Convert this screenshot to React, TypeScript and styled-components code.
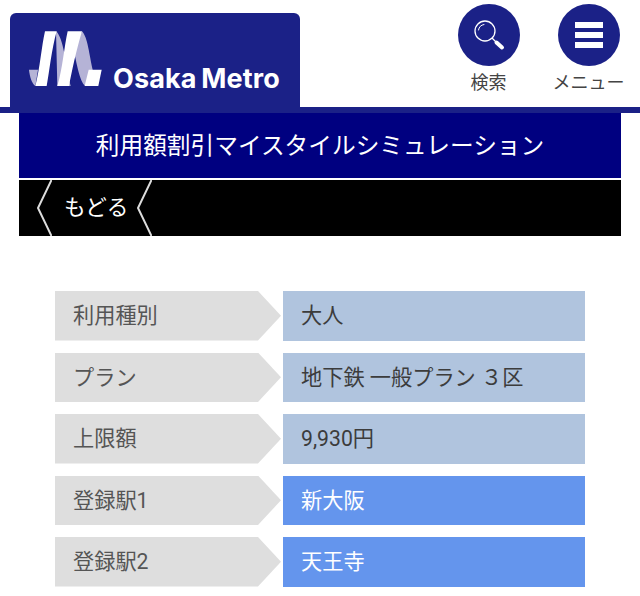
import styled, { createGlobalStyle } from 'styled-components';

const GlobalStyle = createGlobalStyle`
  html, body {
    margin: 0;
    padding: 0;
    background: #fff;
    font-family: Roboto, "Noto Sans CJK JP", "Noto Sans", sans-serif;
  }
`;

const Header = styled.header`
  display: flex;
  justify-content: space-between;
  height: 107px;
  border-bottom: 6px solid #1b2187;
`;

const LogoTab = styled.a`
  display: flex;
  align-items: flex-start;
  width: 290px;
  height: 100px;
  margin: 13px 0 0 10px;
  padding: 9px 0 0 10px;
  box-sizing: border-box;
  background: #1b2187;
  border-radius: 6px 6px 0 0;
`;

const LogoName = styled.span`
  margin: 39px 0 0 3px;
  color: #fff;
  font-family: Inter, sans-serif;
  font-size: 27px;
  line-height: 36px;
  font-weight: 700;
  letter-spacing: 0.15px;
  word-spacing: -2px;
  white-space: nowrap;
`;

const Nav = styled.nav`
  display: flex;
  gap: 27px;
  padding: 4px 15px 0 0;
`;

const NavItem = styled.a`
  display: flex;
  flex-direction: column;
  align-items: center;
  width: 73px;
  color: #444;
  font-size: 18px;
  line-height: 26px;
`;

const Circle = styled.span`
  display: flex;
  flex-direction: column;
  align-items: center;
  justify-content: center;
  gap: 4.5px;
  width: 62px;
  height: 62px;
  margin-bottom: 4px;
  border-radius: 50%;
  background: #1b2187;
`;

const Bar = styled.i`
  display: block;
  width: 28px;
  height: 5.5px;
  background: #fff;
`;

const Main = styled.main`
  padding: 0 19px;
`;

const Title = styled.h1`
  margin: 0;
  height: 65px;
  background: #000080;
  color: #fff;
  font-size: 23.7px;
  font-weight: 400;
  line-height: 67px;
  text-align: center;
  white-space: nowrap;
`;

const BackBar = styled.div`
  display: flex;
  align-items: center;
  gap: 12px;
  height: 56px;
  margin-top: 2px;
  padding-left: 17px;
  background: #000;
  color: #fff;
  font-size: 21.6px;
`;

const BackText = styled.span`
  margin-right: -4px;
  padding-bottom: 6px;
`;

const Rows = styled.div`
  display: flex;
  flex-direction: column;
  gap: 12px;
  margin: 55px 36px 0;
  padding-bottom: 10px;
`;

const Row = styled.div`
  display: grid;
  grid-template-columns: 226px 302px;
  column-gap: 2px;
  height: 49.5px;
  font-size: 21.2px;
  line-height: 49.5px;
`;

const Label = styled.div`
  padding-left: 18px;
  background: #dedede;
  color: #555;
  clip-path: polygon(0 0, 203px 0, 100% 50%, 203px 100%, 0 100%);
`;

const Value = styled.div<{ $selected?: boolean }>`
  padding-left: 18px;
  background: ${(p) => (p.$selected ? '#6495ed' : '#b0c4de')};
  color: ${(p) => (p.$selected ? '#fff' : '#3c3c3c')};
  white-space: pre;
`;

const Chevron = () => (
  <svg width="16" height="56" viewBox="0 0 16 56" fill="none" stroke="#ddd" strokeWidth="2">
    <path d="M15.5 0 L2 28 L15.5 56" />
  </svg>
);

const Logo = () => (
  <svg width="90" height="74" viewBox="0 0 270 222">
    <g fill="#b5b3d6">
      <path d="M27 143 H54 L46 192 C36 185 29 165 27 143 Z" />
      <path d="M108 28 C130 45 138 130 152 192 H112 Z" />
      <path d="M186 28 C203 45 208 100 218 143 L196 192 C178 178 170 120 160 80 Z" />
    </g>
    <g fill="#fff">
      <path d="M75 28 H110 C95 80 88 150 80 192 H46 C60 140 65 70 75 28 Z" />
      <path d="M143 28 H186 C170 80 155 150 147 192 H112 C128 140 133 70 143 28 Z" />
      <path d="M206 143 H245 L235 192 H194 Z" />
    </g>
  </svg>
);

const SearchIcon = () => (
  <svg width="34" height="34" viewBox="0 0 34 34" fill="none" stroke="#fff" strokeLinecap="round">
    <circle cx="13" cy="13" r="10" strokeWidth="1.3" />
    <path d="M6.5 12 A6.5 6.5 0 0 1 12 6.5" strokeWidth="1" />
    <path d="M20.5 20.5 L24 24" strokeWidth="1.3" />
    <path d="M24.5 24.5 L30 29.5" strokeWidth="4" />
  </svg>
);

const rows = [
  { label: '利用種別', value: '大人' },
  { label: 'プラン', value: '地下鉄 一般プラン ３区' },
  { label: '上限額', value: '9,930円' },
  { label: '登録駅1', value: '新大阪', selected: true },
  { label: '登録駅2', value: '天王寺', selected: true },
];

const App = () => {
  return (
    <>
      <GlobalStyle />
      <Header>
        <LogoTab>
          <Logo />
          <LogoName>Osaka Metro</LogoName>
        </LogoTab>
        <Nav>
          <NavItem>
            <Circle>
              <SearchIcon />
            </Circle>
            検索
          </NavItem>
          <NavItem>
            <Circle>
              <Bar />
              <Bar />
              <Bar />
            </Circle>
            メニュー
          </NavItem>
        </Nav>
      </Header>
      <Main>
        <Title>利用額割引マイスタイルシミュレーション</Title>
        <BackBar>
          <Chevron />
          <BackText>もどる</BackText>
          <Chevron />
        </BackBar>
        <Rows>
          {rows.map((row) => (
            <Row key={row.label}>
              <Label>{row.label}</Label>
              <Value $selected={row.selected}>{row.value}</Value>
            </Row>
          ))}
        </Rows>
      </Main>
    </>
  );
};

export default App;
